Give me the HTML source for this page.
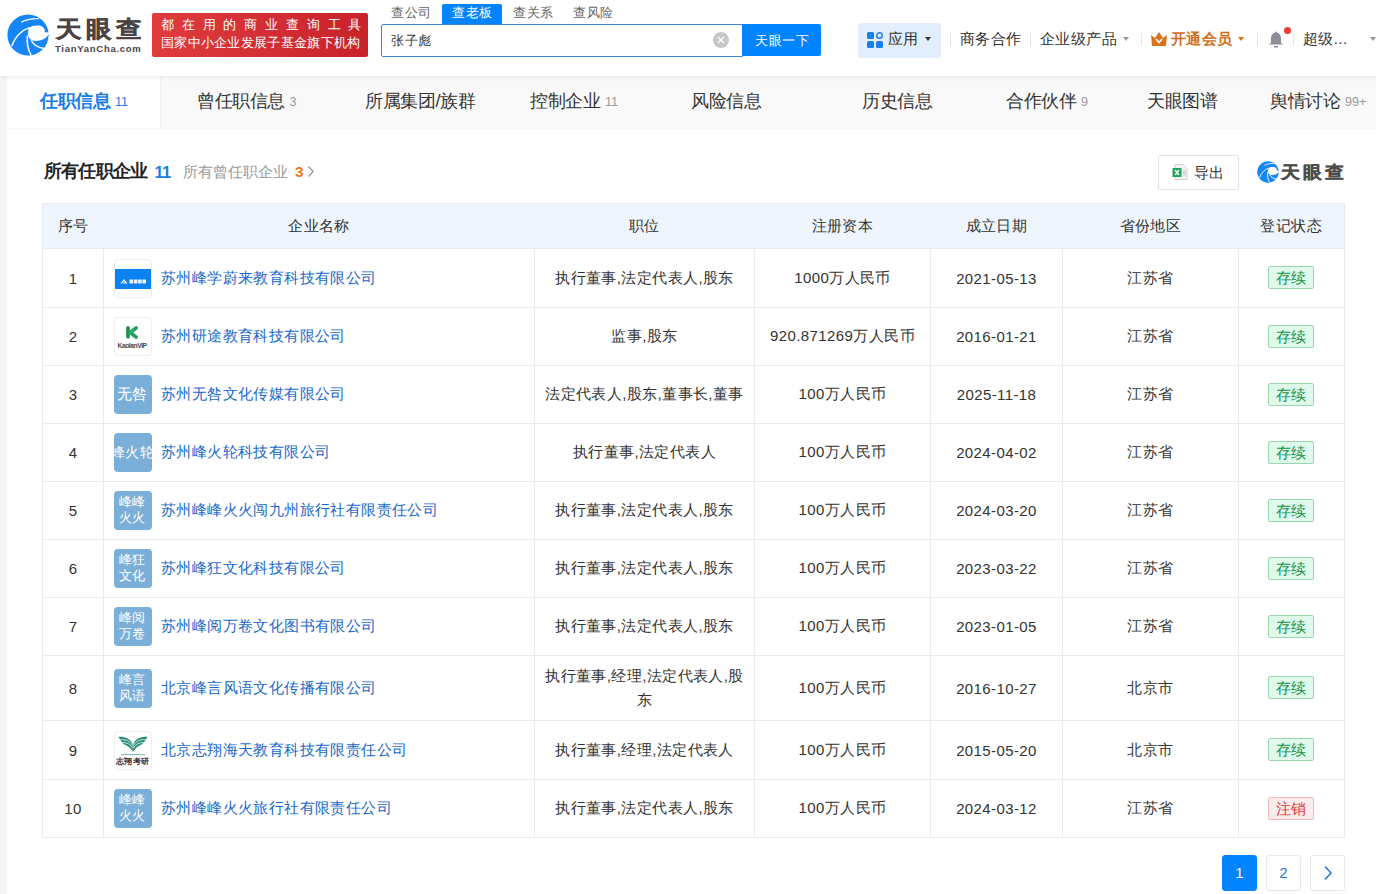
<!DOCTYPE html>
<html><head><meta charset="utf-8">
<style>
*{box-sizing:border-box;margin:0;padding:0}
html,body{width:1376px;height:894px;overflow:hidden;background:#fff;font-family:"Liberation Sans",sans-serif;color:#333}
.a{position:absolute;white-space:nowrap}
#hdr{position:absolute;left:0;top:0;width:1376px;height:76px;background:#fff;z-index:5;box-shadow:0 1px 5px rgba(0,0,0,.085)}
#strip{position:absolute;left:0;top:76px;width:7px;height:818px;background:#f5f5f5}
#tabbar{position:absolute;left:7px;top:76px;width:1369px;height:53px;background:#f9f9f9;border-bottom:1px solid #f7f7f7}
#acttab{position:absolute;left:7px;top:76px;width:154px;height:52px;background:#fff;border-right:1px solid #f0f0f0}
.tab{font-size:18px;letter-spacing:-.4px;line-height:20px;top:91px;color:#333}
.tab small{font-size:12.6px;letter-spacing:0;color:#999;margin-left:4.5px;position:relative;top:-1.5px}
.sep{position:absolute;width:1px;height:13px;top:33px;background:#e6e6e6}
.nav{font-size:15px;letter-spacing:.4px;line-height:18px;top:30px;color:#333}
.caret{position:absolute;width:0;height:0;border-left:3.5px solid transparent;border-right:3.5px solid transparent;border-top:4px solid #333}
table{position:absolute;left:42px;top:203px;width:1303px;border-collapse:collapse;table-layout:fixed}
td,th{border:1px solid #e6ecf2;text-align:center;font-size:15px;letter-spacing:.4px;color:#333;font-weight:normal;padding:0}
th{background:#eef5fd;height:45px;border-left:none;border-right:none}
th:first-child{border-left:1px solid #e6ecf2}
th:last-child{border-right:1px solid #e6ecf2}
td{height:58px}
td.nm{text-align:left}
.logo{display:inline-block;vertical-align:middle;width:38px;height:39px;border-radius:4px;margin-left:9.5px;margin-right:9.5px;position:relative;overflow:hidden}
.lb{background:#7aafd9;color:#fff;text-align:center}
.lt{position:absolute;left:-10px;right:-10px;text-align:center;white-space:nowrap}
td.two{line-height:24px;padding:0 10px}
.lw{border:1px solid #eee;background:#fff}
.cn{color:#1868cc;font-size:15px;letter-spacing:.4px;vertical-align:middle}
.bdg{display:inline-block;width:46px;height:23px;line-height:21px;margin-left:-1px;position:relative;top:-.5px;border:1px solid #9ad6ae;background:#dffaea;color:#15914a;border-radius:2px;font-size:15px;letter-spacing:.4px;vertical-align:middle}
.bdg.red{border-color:#f5b8b8;background:#fdecec;color:#e0393e}
.pg{position:absolute;top:855px;width:35px;height:36px;border:1px solid #e4e7ed;border-radius:3px;text-align:center;line-height:34px;font-size:15px;color:#1f78d8;background:#fff}
</style></head><body>
<div id="hdr">
  <!-- logo -->
  <svg class="a" style="left:5px;top:12px" width="46" height="46" viewBox="0 0 46 46">
    <circle cx="23" cy="23" r="20.6" fill="#1685f8"/>
    <path d="M24.2 15.4 C27 13.6 31 13 34.5 13.6 C37.5 14.2 39.8 16 39.8 18.5 C39.8 19.5 39.5 20 40 20.3 L44 20.6 L44 22 C42 25.5 39 27.5 35 28.4 C31 29.2 27.8 29 26 27.8 C24 26.5 23 24.5 23 21.5 C23 19 23.4 17 24.2 15.4 Z" fill="#fff"/>
    <path d="M16.3 10.2 C21 7.6 28 6.3 33.8 6.6" stroke="#fff" stroke-width="1.3" fill="none"/>
    <path d="M6.5 34.2 C10 25 16 18.5 24.4 15.6" stroke="#fff" stroke-width="1.5" fill="none"/>
    <path d="M22.4 23.5 C21.6 31 22.8 37.5 26.3 43.6" stroke="#fff" stroke-width="1.5" fill="none"/>
    <path d="M26.3 28.2 C28.5 33 33.5 35.8 39.3 36.4" stroke="#fff" stroke-width="1.5" fill="none"/>
  </svg>
  <div class="a" style="left:56px;top:16px;font-size:25px;letter-spacing:5px;line-height:28px;color:#4b4343;font-weight:bold;-webkit-text-stroke:.5px #4b4343;transform:scaleY(.9);transform-origin:0 0">天眼查</div>
  <div class="a" style="left:55px;top:44px;font-size:9.5px;line-height:10px;color:#4b4545;font-weight:bold;letter-spacing:0.72px">TianYanCha.com</div>
  <div class="a" style="left:152px;top:13px;width:216px;height:44px;border-radius:2px;background:linear-gradient(90deg,#e03c3e,#c8222a)"></div>
  <div class="a" style="left:161px;top:17px;font-size:13.2px;line-height:16px;color:#fff;letter-spacing:7.83px">都在用的商业查询工具</div>
  <div class="a" style="left:161px;top:35px;font-size:13.2px;line-height:16px;color:#fff;letter-spacing:.3px">国家中小企业发展子基金旗下机构</div>
  <!-- search -->
  <div class="a" style="left:391px;top:5px;font-size:13px;letter-spacing:.5px;line-height:16px;color:#666">查公司</div>
  <div class="a" style="left:442px;top:4px;width:60px;height:21px;background:#0084ff;border-radius:2px 2px 0 0"></div>
  <div class="a" style="left:452px;top:5px;font-size:13px;letter-spacing:.5px;line-height:16px;color:#fff">查老板</div>
  <div class="a" style="left:513px;top:5px;font-size:13px;letter-spacing:.5px;line-height:16px;color:#666">查关系</div>
  <div class="a" style="left:573px;top:5px;font-size:13px;letter-spacing:.5px;line-height:16px;color:#666">查风险</div>
  <div class="a" style="left:381px;top:24px;width:362px;height:33px;border:1px solid #3d86d2;border-radius:2px 0 0 2px;background:#fff"></div>
  <div class="a" style="left:391px;top:32px;font-size:13px;letter-spacing:.5px;line-height:17px;color:#333">张子彪</div>
  <div class="a" style="left:713px;top:31.5px;width:16px;height:16px;border-radius:50%;background:#c6c7ca"></div>
  <svg class="a" style="left:713px;top:31.5px" width="16" height="16"><path d="M5 5 L11 11 M11 5 L5 11" stroke="#fff" stroke-width="1.3"/></svg>
  <div class="a" style="left:742px;top:24px;width:79px;height:32px;background:#0084ff;border-radius:0 2px 2px 0"></div>
  <div class="a" style="left:755px;top:32px;font-size:13px;letter-spacing:.5px;line-height:17px;color:#fff">天眼一下</div>
  <!-- right nav -->
  <div class="a" style="left:858px;top:23px;width:83px;height:35px;background:#e2eefc;border-radius:3px"></div>
  <svg class="a" style="left:867px;top:32px" width="16" height="16" viewBox="0 0 16 16">
    <rect x="0" y="0" width="7" height="7" rx="1.5" fill="#1a7ef0"/>
    <circle cx="12.5" cy="3.5" r="2.8" fill="none" stroke="#1a7ef0" stroke-width="1.4"/>
    <rect x="0" y="9" width="7" height="7" rx="1.5" fill="#1a7ef0"/>
    <rect x="9" y="9" width="7" height="7" rx="1.5" fill="#1a7ef0"/>
  </svg>
  <div class="a nav" style="left:888px">应用</div>
  <div class="caret" style="left:925px;top:37px"></div>
  <div class="sep" style="left:950px"></div>
  <div class="a nav" style="left:960px">商务合作</div>
  <div class="sep" style="left:1030px"></div>
  <div class="a nav" style="left:1040px">企业级产品</div>
  <div class="caret" style="left:1123px;top:37px;border-top-color:#999"></div>
  <div class="sep" style="left:1141px"></div>
  <svg class="a" style="left:1151px;top:32px" width="16" height="14" viewBox="0 0 16 14">
    <path d="M0 3 L4 6 L8 0 L12 6 L16 3 L15 14 L1 14 Z" fill="#d9741c"/>
    <path d="M5 7 L8 10.5 L11 7" stroke="#fff" stroke-width="1.6" fill="none"/>
  </svg>
  <div class="a nav" style="left:1171px;color:#d0701e;font-weight:bold">开通会员</div>
  <div class="caret" style="left:1238px;top:37px;border-top-color:#d9741c"></div>
  <div class="sep" style="left:1257px"></div>
  <svg class="a" style="left:1268px;top:31px" width="16" height="17" viewBox="0 0 16 17">
    <path d="M8 0.5 C8.8 0.5 8.8 1.5 8.8 1.8 C12 2.5 13 5 13 8 L13 12 L15.5 13.5 L0.5 13.5 L3 12 L3 8 C3 5 4 2.5 7.2 1.8 C7.2 1.5 7.2 0.5 8 0.5 Z" fill="#8b8e94"/>
    <rect x="6" y="15" width="4" height="1.5" fill="#8b8e94"/>
  </svg>
  <div class="a" style="left:1284px;top:27px;width:7px;height:7px;border-radius:50%;background:#f03a32"></div>
  <div class="sep" style="left:1293px"></div>
  <div class="a nav" style="left:1303px">超级...</div>
  <div class="caret" style="left:1370px;top:37px;border-top-color:#999"></div>
</div>
<div id="strip"></div>
<div id="tabbar"></div>
<div id="acttab"></div>
<div class="a tab" style="left:40px;color:#1a7ee6;font-weight:bold">任职信息<small style="color:#1a7ee6;font-weight:normal">11</small></div>
<div class="a tab" style="left:197px">曾任职信息<small>3</small></div>
<div class="a tab" style="left:365px">所属集团/族群</div>
<div class="a tab" style="left:530px">控制企业<small>11</small></div>
<div class="a tab" style="left:691px">风险信息</div>
<div class="a tab" style="left:862px">历史信息</div>
<div class="a tab" style="left:1006px">合作伙伴<small>9</small></div>
<div class="a tab" style="left:1147px">天眼图谱</div>
<div class="a tab" style="left:1270px">舆情讨论<small>99+</small></div>

<!-- section header -->
<div class="a" style="left:44px;top:160px;font-size:18px;letter-spacing:-.8px;line-height:22px;font-weight:bold;color:#222">所有任职企业</div>
<div class="a" style="left:154.5px;top:162px;font-size:16.5px;letter-spacing:-.8px;line-height:20px;font-weight:bold;color:#1a7ee6">11</div>
<div class="a" style="left:183px;top:162px;font-size:15.4px;line-height:19px;color:#999">所有曾任职企业</div>
<div class="a" style="left:295px;top:162px;font-size:15.4px;line-height:19px;color:#f07a24;font-weight:bold">3</div>
<svg class="a" style="left:307px;top:165px" width="8" height="13"><path d="M1.5 1.5 L6 6.5 L1.5 11.5" stroke="#999" stroke-width="1.3" fill="none"/></svg>

<div class="a" style="left:1158px;top:155px;width:81px;height:35px;border:1px solid #e0e4ea;border-radius:2px;background:#fff"></div>
<svg class="a" style="left:1172px;top:164px" width="16" height="16" viewBox="0 0 16 16">
  <path d="M3 0.5 L11 0.5 L15 4.5 L15 15.5 L3 15.5 Z" fill="#f4f4f4" stroke="#cfcfcf" stroke-width="1"/>
  <rect x="0.5" y="4" width="9" height="9" fill="#22a35a"/>
  <path d="M3 6 L7 11 M7 6 L3 11" stroke="#fff" stroke-width="1.3"/>
  <path d="M11 7 H14 M11 9 H14 M11 11 H14" stroke="#bbb" stroke-width="0.8"/>
</svg>
<div class="a" style="left:1194px;top:163px;font-size:15.4px;line-height:19px;color:#333">导出</div>
<svg class="a" style="left:1255.5px;top:160px" width="24" height="24" viewBox="0 0 46 46">
    <circle cx="23" cy="23" r="20.6" fill="#1685f8"/>
    <path d="M24.2 15.4 C27 13.6 31 13 34.5 13.6 C37.5 14.2 39.8 16 39.8 18.5 C39.8 19.5 39.5 20 40 20.3 L44 20.6 L44 22 C42 25.5 39 27.5 35 28.4 C31 29.2 27.8 29 26 27.8 C24 26.5 23 24.5 23 21.5 C23 19 23.4 17 24.2 15.4 Z" fill="#fff"/>
    <path d="M16.3 10.2 C21 7.6 28 6.3 33.8 6.6" stroke="#fff" stroke-width="1.6" fill="none"/>
    <path d="M6.5 34.2 C10 25 16 18.5 24.4 15.6" stroke="#fff" stroke-width="1.8" fill="none"/>
    <path d="M22.4 23.5 C21.6 31 22.8 37.5 26.3 43.6" stroke="#fff" stroke-width="1.8" fill="none"/>
    <path d="M26.3 28.2 C28.5 33 33.5 35.8 39.3 36.4" stroke="#fff" stroke-width="1.8" fill="none"/>
  </svg>
<div class="a" style="left:1281px;top:163px;font-size:19px;letter-spacing:3px;line-height:22px;color:#4d4d4d;font-weight:bold;-webkit-text-stroke:.4px #4d4d4d;transform:scaleY(.9);transform-origin:0 0">天眼查</div>

<table>
<colgroup><col style="width:61px"><col style="width:431px"><col style="width:220px"><col style="width:176px"><col style="width:132px"><col style="width:176px"><col style="width:106px"></colgroup>
<tr><th>序号</th><th>企业名称</th><th>职位</th><th>注册资本</th><th>成立日期</th><th>省份地区</th><th>登记状态</th></tr>
<tr style="height:59px"><td>1</td><td class="nm"><span class="logo lw"><svg style="position:absolute;left:0;top:0" width="36" height="37" viewBox="0 0 36 37"><rect x="0" y="9" width="36" height="20" fill="#0b82f3"/><path d="M5.5 23.5 L9 19 L12.5 23.5 L10.8 23.5 L9 21 L7.2 23.5 Z" fill="#fff"/><path d="M8 23.5 L9.6 21.8 L11 23.5 Z" fill="#cfe6ff"/><rect x="14.5" y="19.5" width="3.6" height="4" fill="#e8f3ff"/><rect x="18.8" y="19.5" width="3.6" height="4" fill="#e8f3ff"/><rect x="23.1" y="19.5" width="3.6" height="4" fill="#e8f3ff"/><rect x="27.4" y="19.5" width="3.6" height="4" fill="#e8f3ff"/></svg></span><span class="cn">苏州峰学蔚来教育科技有限公司</span></td><td>执行董事,法定代表人,股东</td><td>1000万人民币</td><td>2021-05-13</td><td>江苏省</td><td><span class="bdg">存续</span></td></tr>
<tr style="height:58px"><td>2</td><td class="nm"><span class="logo lw"><svg style="position:absolute;left:0;top:0" width="36" height="37" viewBox="0 0 36 37"><g transform="translate(13,9.5) scale(.92)"><path d="M0 0 L0 9.5" stroke="#1e8f52" stroke-width="4" stroke-linecap="round" transform="translate(0,.5)"/><path d="M8.8 .5 L2.5 5.5 L8.8 10.5" stroke="#22a05c" stroke-width="4" stroke-linecap="round" stroke-linejoin="round" fill="none"/><path d="M1.5 7 L6 2.7" stroke="#5fd493" stroke-width="1" opacity=".8"/></g></svg><span style="position:absolute;left:3px;top:23.5px;font-size:6.8px;line-height:7px;letter-spacing:-.5px;color:#4a4a4a;font-weight:bold;white-space:nowrap">KaolanVIP</span></span><span class="cn">苏州研途教育科技有限公司</span></td><td>监事,股东</td><td>920.871269万人民币</td><td>2016-01-21</td><td>江苏省</td><td><span class="bdg">存续</span></td></tr>
<tr style="height:58px"><td>3</td><td class="nm"><span class="logo lb"><span class="lt" style="top:10px;font-size:15px;letter-spacing:.4px;line-height:18px">无咎</span></span><span class="cn">苏州无咎文化传媒有限公司</span></td><td>法定代表人,股东,董事长,董事</td><td>100万人民币</td><td>2025-11-18</td><td>江苏省</td><td><span class="bdg">存续</span></td></tr>
<tr style="height:58px"><td>4</td><td class="nm"><span class="logo lb"><span class="lt" style="top:10.5px;font-size:14px;letter-spacing:.3px;line-height:17px">峰火轮</span></span><span class="cn">苏州峰火轮科技有限公司</span></td><td>执行董事,法定代表人</td><td>100万人民币</td><td>2024-04-02</td><td>江苏省</td><td><span class="bdg">存续</span></td></tr>
<tr style="height:58px"><td>5</td><td class="nm"><span class="logo lb"><span class="lt" style="top:3px;font-size:13px;letter-spacing:.2px;line-height:16.3px">峰峰<br>火火</span></span><span class="cn">苏州峰峰火火闯九州旅行社有限责任公司</span></td><td>执行董事,法定代表人,股东</td><td>100万人民币</td><td>2024-03-20</td><td>江苏省</td><td><span class="bdg">存续</span></td></tr>
<tr style="height:58px"><td>6</td><td class="nm"><span class="logo lb"><span class="lt" style="top:3px;font-size:13px;letter-spacing:.2px;line-height:16.3px">峰狂<br>文化</span></span><span class="cn">苏州峰狂文化科技有限公司</span></td><td>执行董事,法定代表人,股东</td><td>100万人民币</td><td>2023-03-22</td><td>江苏省</td><td><span class="bdg">存续</span></td></tr>
<tr style="height:58px"><td>7</td><td class="nm"><span class="logo lb"><span class="lt" style="top:3px;font-size:13px;letter-spacing:.2px;line-height:16.3px">峰阅<br>万卷</span></span><span class="cn">苏州峰阅万卷文化图书有限公司</span></td><td>执行董事,法定代表人,股东</td><td>100万人民币</td><td>2023-01-05</td><td>江苏省</td><td><span class="bdg">存续</span></td></tr>
<tr style="height:65px"><td>8</td><td class="nm"><span class="logo lb"><span class="lt" style="top:3px;font-size:13px;letter-spacing:.2px;line-height:16.3px">峰言<br>风语</span></span><span class="cn">北京峰言风语文化传播有限公司</span></td><td class="two">执行董事,经理,法定代表人,股<br>东</td><td>100万人民币</td><td>2016-10-27</td><td>北京市</td><td><span class="bdg">存续</span></td></tr>
<tr style="height:59px"><td>9</td><td class="nm"><span class="logo lw"><svg style="position:absolute;left:0;top:0" width="36" height="37" viewBox="0 0 36 37"><path d="M3.5 4.8 C10 4.5 15.5 6.5 17.6 12 L18 19.8 C15.5 15.5 12 13.5 8.5 12 C6.5 9.5 5 7.5 3.5 4.8 Z" fill="#2a8a78"/><path d="M32.5 4.8 C26 4.5 20.5 6.5 18.4 12 L18 19.8 C20.5 15.5 24 13.5 27.5 12 C29.5 9.5 31 7.5 32.5 4.8 Z" fill="#2a8a78"/><path d="M5.5 7.6 C11 7.4 15 9 17.3 13.2 M7.5 10.4 C12 10.5 15.5 12.3 17.6 16 M30.5 7.6 C25 7.4 21 9 18.7 13.2 M28.5 10.4 C24 10.5 20.5 12.3 18.4 16" stroke="#d6f2ea" stroke-width=".9" fill="none"/><path d="M6 22.6 H30" stroke="#4f9a90" stroke-width=".9" opacity=".8"/></svg><span style="position:absolute;left:1px;top:26.5px;font-size:8px;line-height:8px;letter-spacing:.6px;color:#3a3030;font-weight:bold;white-space:nowrap">志翔考研</span></span><span class="cn">北京志翔海天教育科技有限责任公司</span></td><td>执行董事,经理,法定代表人</td><td>100万人民币</td><td>2015-05-20</td><td>北京市</td><td><span class="bdg">存续</span></td></tr>
<tr style="height:58px"><td>10</td><td class="nm"><span class="logo lb"><span class="lt" style="top:3px;font-size:13px;letter-spacing:.2px;line-height:16.3px">峰峰<br>火火</span></span><span class="cn">苏州峰峰火火旅行社有限责任公司</span></td><td>执行董事,法定代表人,股东</td><td>100万人民币</td><td>2024-03-12</td><td>江苏省</td><td><span class="bdg red">注销</span></td></tr>
</table>

<div class="pg" style="left:1222px;background:#0084ff;border-color:#0084ff;color:#fff">1</div>
<div class="pg" style="left:1266px">2</div>
<div class="pg" style="left:1310px"><svg width="10" height="16" style="margin-top:9px"><path d="M2 1.5 L8 8 L2 14.5" stroke="#1f78d8" stroke-width="1.5" fill="none"/></svg></div>
</body></html>
